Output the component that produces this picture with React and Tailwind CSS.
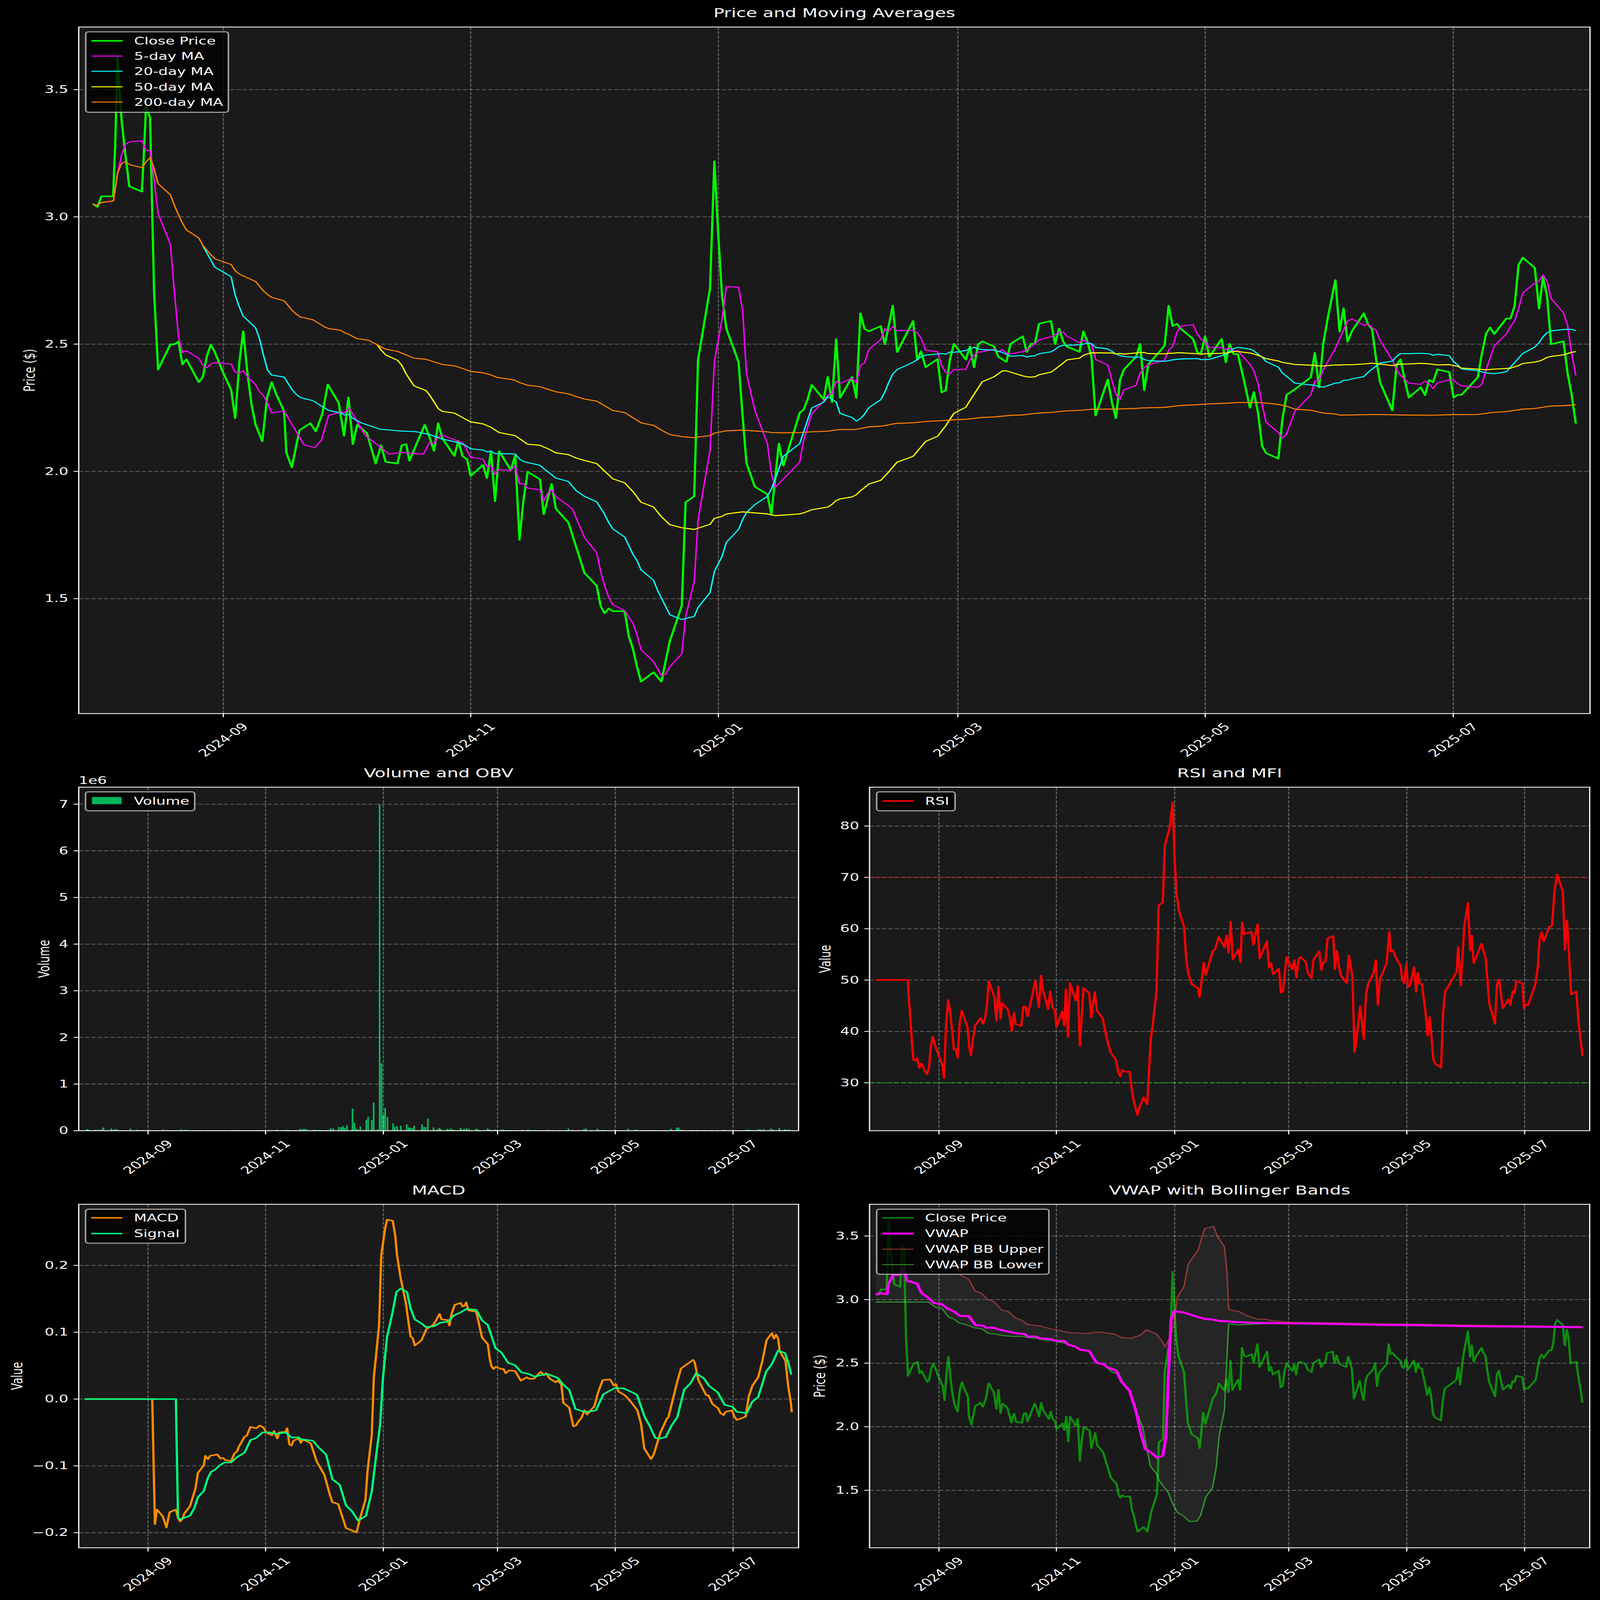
// Series were read off the chart, so they are kept in page pixels and each panel
// uses a viewBox in the same coordinates.
const seg = (ox, oy, sx, sy, flat) => {
  const out = [];
  for (let i = 0; i < flat.length; i += 2) out.push([ox + flat[i] / sx, oy + flat[i + 1] / sy]);
  return out;
};
const z1 = (f) => seg(0, 0, 1.3067, 1.568, f);
const z2 = (f) => seg(1200, 1400, 1.12, 0.98, f);
const z8 = (f) => seg(220, 400, 1.4255, 1.206, f);
const z9 = (f) => seg(1300, 600, 1.4933, 0.7127, f);
const z10 = (f) => seg(2300, 1100, 1.4933, 1.568, f);
const z11 = (f) => seg(3350, 1000, 1.432, 1.568, f);
const zV = (f) => seg(2200, 4750, 0.6907, 0.8924, f);
const zR = (f) => seg(2200, 3050, 0.6907, 0.98, f);
const zM = (f) => seg(0, 4750, 0.6817, 0.8924, f);

// VWAP panel pixels <-> price panel pixels
const vwapToPrice = ([x, y]) => [624 + (x - 2623) / 0.4757, 882 + (y - 5285.6) * 2.002];
const priceToVwap = ([x, y]) => [2623 + (x - 624) * 0.4757, 5285.6 + (y - 882) / 2.002];

const closePrice = [
  ...z1([338,1300,356,1320,370,1252,413,1252,421,900,429,368,443,750,458,990,472,1188,518,1222,526,960,533,683,548,750,551,1000]),
  ...z8([300,950,316,1330,365,1206,381,1206,397,1192,413,1305,429,1280,478,1392,494,1368,510,1265,526,1208,542,1245,575,1345,607,1430,623,1569,640,1290,655,1142,672,1350,688,1500,704,1600,731,1682,750,1470,768,1392,786,1450,818,1535]),
  ...zV([350,905,355,932,362,865,372,852,377,867,383,835,388,782,398,815,403,875,407,805,411,890,415,855,424,870,432,925,437,892,441,922,452,925,456,892,460,890,463,920,477,855]).map(vwapToPrice),
  ...z2([0,370,14,425,27,315,40,375,78,445,90,385,103,445]),
  ...z9([8,905,22,952,74,920,90,958,107,880,124,1025,141,880,190,935,208,893,226,1137,243,1020,260,940,312,962,327,1063,360,975,378,1047,430,1087,497,1233,548,1270,565,1330,581,1350,598,1336,615,1344,665,1344,682,1417,700,1455,716,1505,733,1548,785,1521,818,1548,853,1431,903,1328,919,1028,955,1011,971,615,1021,408,1039,40,1055,250,1071,430,1089,525,1140,622,1157,780,1173,915,1208,983,1260,1005,1277,1063,1308,858,1327,922,1395,769,1411,760,1428,730,1445,688,1495,730,1512,665,1530,738,1547,555]),
  ...z10([70,812,120,680,138,812,155,273,172,372,190,388,240,355,257,470,290,225,308,520,375,322,392,570,408,516,427,617,477,565,494,778,511,765,528,570,545,468,595,568,612,485,629,617,646,470,663,452,713,485,730,550,764,583,781,468,832,420,849,520,866,468,883,468,900,340,950,322,967,470,984,370,1001,453,1017,486,1069,519,1085,388,1102,453,1119,550,1136,925,1187,695,1204,840,1221,942,1238,698,1254,632,1305,550,1322,468,1339,763,1356,600,1424,480,1441,225,1458,355,1475,340,1492,372,1543,437,1560,520]),
  ...z11([7,690,24,577,41,708,66,650,90,593,107,742,122,625,138,690,155,690,180,860,203,1032,219,932,236,1065,252,1275,268,1322,317,1357,333,1110,350,950,383,915,447,838,463,682,480,902,497,620,513,475,545,218,562,547,578,398,594,611,611,545,659,430,676,500,692,530,708,720,724,870,773,1050,790,760,806,723,822,850,839,967,887,902,904,952,920,855,936,870,953,788,1001,805,1018,968,1034,950,1050,950,1115,838,1131,690,1148,560,1164,520,1181,562,1229,463,1246,463,1262,385,1278,122,1295,75,1343,140,1360,400,1376,200,1392,320,1408,627,1458,608,1474,810,1490,945,1507,1133]),
];

const ma5 = [
  ...z8([55,518,73,525,90,511,138,503,155,365,170,280,186,225,203,213,252,208,268,256,285,256,300,400,316,565,365,716,381,950,397,1165,413,1247,429,1238,478,1275,494,1308,510,1322,526,1303,542,1296,607,1303,623,1343,640,1348,655,1335,672,1365,704,1405,720,1438,736,1460,752,1495,768,1543,818,1533,835,1570]),
  [850,1810],[880,1820],[898,1790],
  ...z8([995,1555,1044,1538,1060,1542,1075,1517,1090,1545]),
  [1020,1770],[1058,1813],[1087,1847],[1120,1840],[1183,1847],
  ...z2([0,392,15,395,25,372,40,362,103,393]),
  ...z9([0,868,22,898,74,903,90,925,107,922,124,947,141,933,190,936,208,922,226,975,243,975,260,987,312,992,327,1025,345,1002,360,992,378,1012,430,1038,447,1048,497,1130,548,1175,565,1230,581,1270,598,1303,615,1325,665,1342,700,1380,716,1412,733,1455,785,1490,818,1530,835,1528,853,1505,903,1468,919,1360,955,1258,971,1080,1021,878,1039,620,1071,498,1089,403,1140,405,1157,472,1173,655,1208,762,1260,858,1277,945,1293,985,1395,912,1411,850,1445,772,1495,735,1512,718,1530,713,1547,677]),
  ...z10([70,720,120,688,138,715,155,605,172,590,190,505,240,440,257,372,273,388,290,358,308,385,375,380,392,398,408,430,427,508,477,518,494,607,511,650,528,660,545,632,595,632,612,570,629,540,646,522,663,518,713,503,730,518,747,505,764,527,781,532,832,517,849,505,866,488,900,443,950,422,967,410,984,393,1001,392,1017,420,1069,460,1085,443,1119,470,1136,567,1187,602,1204,700,1221,790,1238,820,1254,762,1305,732,1322,655,1339,620,1356,603,1424,572,1441,507,1458,485,1475,398,1492,355,1543,345,1560,405]),
  ...z11([8,595,24,612,41,648,90,648,107,662,122,648,138,670,155,668,203,755,219,795,236,880,252,1010,268,1125,317,1190,333,1226,350,1200,383,1055,447,950,463,863,480,855,497,790,545,653,594,480,611,465,659,507,676,497,692,522,708,537,724,603,773,728,790,790,806,825,839,875,887,883,904,862,920,880,936,910,953,873,1001,855,1018,858,1034,878,1050,892,1115,902,1131,882,1148,790,1181,637,1229,563,1246,515,1262,480,1278,400,1295,300,1343,237,1360,225,1376,185,1392,225,1408,335,1458,428,1474,505,1490,680,1507,827]),
];

const ma20 = [
  ...z8([494,722,542,828,607,875,623,965,640,1025,655,1068,704,1125,720,1180,736,1260,752,1333,768,1357,818,1367,850,1430,865,1450,882,1467,933,1483,978,1518,995,1530,1044,1543,1060,1553,1075,1550,1090,1568]),
  [1010,1720],[1060,1745],[1120,1753],[1160,1755],
  ...z2([0,360,15,367,40,378,90,392]),
  ...z9([0,863,22,873,74,877,90,882,107,880,124,887,208,888,226,903,243,910,312,921,327,931,345,940,378,958,430,968,463,995,497,1011,548,1027,581,1063,598,1087,615,1105,665,1129,700,1180,716,1197,733,1224,785,1254,803,1285,853,1354,903,1368,955,1359,971,1333,1021,1290,1039,1229,1071,1185,1089,1144,1140,1107,1157,1078,1173,1058,1208,1035,1260,1011,1277,990,1327,895,1395,858,1411,825,1445,755,1495,738,1512,722,1547,737]),
  ...z10([70,912,120,937,138,960,155,945,172,917,190,875,240,824,257,775,273,715,290,660,308,632,375,585,392,568,408,550,427,540,494,530,511,534,528,520,545,522,595,510,612,500,629,490,646,500,663,504,713,508,747,522,781,547,832,542,849,552,866,546,883,544,900,531,950,519,967,503,984,484,1001,478,1069,474,1085,470,1102,463,1119,467,1136,490,1187,500,1204,515,1221,533,1254,549,1305,554,1322,552,1339,568,1356,574,1424,580,1458,570,1492,564,1560,562]),
  ...z11([8,725,41,724,90,700,107,693,138,655,155,647,203,658,219,670,252,710,268,738,317,773,333,810,383,875,447,887,463,888,480,897,497,901,545,875,562,873,578,857,594,856,611,848,659,834,676,806,692,786,724,747,773,735,790,705,806,687,839,687,887,685,920,688,936,698,953,691,1001,700,1018,737,1034,758,1050,785,1115,796,1148,810,1181,815,1229,803,1295,686,1343,645,1360,618,1376,580,1392,553,1408,542,1458,533,1490,532,1507,541]),
];

const ma50 = [
  ...z8([1188,1208,1205,1235,1222,1258,1270,1285,1287,1310,1303,1350,1335,1410,1383,1433,1400,1460,1432,1522,1448,1535,1497,1544]),
  ...z9([0,787,22,795,74,801,107,811,141,826,208,835,260,860,312,863,327,868,345,873,378,885,430,890,463,900,497,907,548,916,615,960,665,972,700,998,733,1028,785,1042,818,1070,853,1093,903,1102,955,1107,1021,1092,1039,1075,1071,1069,1089,1062,1157,1056,1260,1062,1293,1067,1395,1062,1411,1059,1445,1050,1512,1042,1530,1034,1547,1023]),
  ...z10([70,1457,120,1444,138,1430,155,1405,172,1385,190,1362,240,1338,273,1285,308,1222,375,1185,427,1090,477,1057,511,990,545,911,595,872,612,830,663,710,713,677,747,640,764,640,832,672,849,678,866,680,883,678,900,665,950,648,967,630,1001,590,1017,570,1069,559,1085,541,1102,532,1119,525,1204,526,1221,532,1238,529,1254,533,1322,524,1339,523,1356,530,1424,532,1441,528,1458,528,1475,525,1492,525,1560,531]),
  ...z11([8,691,24,688,107,684,138,674,155,674,203,683,219,689,252,708,268,719,317,734,333,743,383,756,463,762,480,766,497,766,545,759,562,760,578,758,611,758,659,753,692,748,773,763,790,757,806,754,839,753,887,749,920,752,953,759,1001,757,1034,768,1050,779,1115,786,1148,790,1181,786,1246,780,1278,763,1295,750,1343,741,1360,735,1376,725,1392,711,1408,705,1458,695,1490,679,1507,674]),
];

const ma200 = [
  ...z8([55,518,73,525,90,511,138,503,155,365,170,320,186,310,203,325,252,340,268,312,285,290,300,345,316,418,365,473,381,525,397,570,413,612,429,645,478,685,494,720,510,745,542,787,607,815,623,845,640,862,655,871,704,898,736,945,752,962,768,976,818,993,850,1040,865,1057,882,1072,933,1086,978,1120,995,1129,1044,1138,1060,1150,1075,1157,1107,1178,1155,1187,1188,1208,1222,1230,1270,1241,1335,1274,1383,1280,1416,1293,1448,1305,1497,1312]),
  ...z9([0,643,22,649,74,653,107,659,131,666,190,672,208,675,226,681,260,689,312,693,327,697,378,708,430,714,463,722,497,729,548,735,615,762,665,768,733,798,785,805,818,819,853,832,903,838,955,841,971,839,1021,835,1039,828,1089,821,1157,819,1260,824,1277,826,1327,827,1395,826,1445,824,1512,822,1563,817]),
  ...z10([120,1014,138,1013,190,997,240,993,257,989,290,979,308,975,375,971,427,963,511,956,545,952,595,949,612,946,663,937,713,934,781,924,832,921,900,909,950,905,1017,895,1069,892,1119,885,1238,883,1305,880,1322,877,1424,873,1492,861,1560,856]),
  ...z11([8,1011,41,1007,90,1005,155,999,236,999,268,1002,317,1011,350,1022,383,1041,447,1048,497,1066,545,1072,562,1079,611,1078,708,1075,839,1079,936,1080,1018,1076,1115,1075,1181,1061,1229,1057,1295,1041,1343,1037,1408,1021,1458,1019,1507,1013]),
];

const rsi = zR([171,917,232,917,234,990,238,1100,240,1170,243,1237,247,1238,250,1228,254,1268,258,1250,265,1280,269,1293,273,1265,276,1190,280,1143,285,1180,295,1235,299,1260,302,1308,306,1090,310,997,314,1050,318,1130,321,1195,325,1193,328,1228,332,1090,336,1040,347,1105,351,1190,354,1217,358,1150,362,1098,373,1069,377,1092,381,1070,385,1015,388,921,399,985,403,1080,407,944,411,1072,414,1010,425,1035,429,1070,433,1120,437,1048,440,1093,451,1101,455,1023,459,1023,463,1062,470,1000,478,920,485,1027,489,900,492,950,503,1035,507,962,511,1027,516,1037,519,1105,530,1043,534,1100,537,955,541,1145,545,930,556,1000,560,940,564,1180,571,950,582,970,586,1067,593,965,597,1040,608,1070,616,1150,623,1205,634,1238,638,1285,642,1302,646,1275,650,1283,660,1283,664,1350,668,1400,675,1455,680,1420,687,1385,694,1413,698,1260,701,1150,705,1090,712,960,716,620,724,608,728,380,737,315,743,210,747,440,751,580,755,640,765,705,769,830,773,890,780,935,792,950,795,985,799,920,803,848,807,897,821,800,825,795,832,745,843,788,847,740,851,810,855,685,859,835,870,795,874,847,877,688,881,735,895,725,899,777,907,695,911,832,925,762,929,868,933,850,937,895,948,872,952,968,956,962,963,825,966,840,974,875,978,838,982,908,986,835,990,826,1000,845,1004,890,1011,910,1015,835,1026,803,1030,878,1034,845,1038,845,1042,752,1053,742,1056,875,1060,800,1064,865,1068,900,1079,930,1083,820,1090,900,1094,1205,1097,1170,1105,1022,1112,1153,1116,980,1120,935,1131,888,1135,838,1139,1017,1143,915,1156,850,1161,725,1164,805,1168,798,1172,820,1183,862,1186,915,1190,930,1194,852,1197,945,1201,940,1209,866,1213,965,1216,888,1220,933,1224,933,1231,1045,1235,1140,1239,1065,1242,1130,1246,1230,1250,1252,1261,1267,1265,1045,1269,960,1273,950,1291,885,1294,786,1299,940,1306,700,1313,610,1317,800,1320,740,1324,850,1339,773,1347,830,1354,1010,1365,1092,1369,935,1373,915,1380,1030,1391,995,1395,1017,1399,962,1403,970,1406,922,1418,930,1421,1030,1425,1015,1429,1017,1443,935,1448,860,1451,755,1455,728,1459,763,1470,705,1475,702,1480,560,1485,497,1496,565,1500,798,1504,680,1508,820,1512,975,1522,963,1526,1080,1530,1150,1534,1220]);

const macd = zM([161,839,290,839,295,1293,299,1240,310,1265,317,1305,323,1250,335,1240,339,1270,343,1283,347,1275,351,1255,362,1227,372,1165,377,1107,388,1080,391,1045,396,1057,400,1045,414,1040,420,1055,425,1053,429,1060,440,1064,447,1035,451,1030,455,1012,466,975,470,972,477,940,488,945,495,935,502,943,507,960,518,970,522,955,528,982,532,960,544,958,547,945,551,1003,555,1008,559,990,569,982,573,998,577,985,592,1000,603,1065,618,1115,628,1185,633,1213,644,1220,659,1307,679,1323,686,1270,696,1205,700,1100,708,970,712,760,716,685,722,570,726,320,733,225,737,188,748,192,753,250,756,315,763,400,773,490,778,560,782,612,786,618,790,645,803,625,812,585,825,570,830,555,837,530,841,550,852,552,856,572,860,530,866,497,877,490,881,503,885,500,888,488,892,517,907,522,918,615,929,640,933,695,936,720,940,730,944,722,955,730,959,730,963,745,970,735,981,737,985,750,992,772,1003,760,1007,765,1017,765,1030,740,1036,752,1040,745,1047,765,1058,778,1062,772,1069,785,1073,853,1084,870,1092,938,1097,935,1100,925,1108,905,1113,880,1118,895,1132,865,1139,815,1148,770,1162,768,1169,790,1173,785,1178,812,1190,825,1202,850,1214,880,1221,930,1227,1018,1240,1057,1245,1040,1258,960,1270,910,1273,905,1290,775,1297,728,1320,697,1323,705,1330,770,1345,825,1349,825,1357,857,1368,873,1372,890,1378,897,1382,885,1394,880,1398,900,1403,915,1420,903,1426,830,1433,790,1444,760,1452,700,1460,625,1470,600,1474,620,1478,605,1482,620,1485,665,1496,700,1501,790,1506,850,1508,887]);

const signal = zM([161,839,335,839,339,1270,344,1275,362,1262,370,1235,377,1195,388,1173,396,1125,402,1103,410,1095,418,1080,428,1069,440,1069,451,1050,466,1033,477,988,488,980,500,960,514,960,526,965,544,960,555,978,569,978,573,985,596,990,607,1015,621,1040,633,1130,647,1150,659,1225,670,1245,682,1280,697,1263,708,1175,716,1050,724,930,729,770,737,615,747,530,755,450,763,438,775,450,782,510,790,550,803,565,811,578,826,575,838,562,853,558,865,535,877,525,888,512,907,515,918,553,929,570,944,655,955,670,968,708,980,715,993,742,1007,748,1018,757,1036,750,1043,748,1062,762,1073,787,1084,805,1096,875,1111,884,1119,885,1135,880,1149,822,1160,810,1170,800,1187,800,1197,808,1213,823,1228,905,1237,935,1248,980,1257,982,1268,977,1279,935,1290,905,1303,805,1315,782,1326,745,1341,765,1350,790,1367,815,1380,860,1395,867,1403,885,1422,890,1433,848,1444,832,1459,740,1470,712,1482,663,1495,672,1501,705,1507,750]);

const vwap = zV([170,460,178,455,192,458,195,420,204,388,214,388,224,368,231,410,250,420,258,453,272,472,282,490,298,495,310,512,320,520,332,537,350,538,362,570,378,573,383,580,398,580,410,588,424,593,440,600,458,603,463,612,480,612,485,618,510,622,517,628,534,628,542,642,555,648,565,660,582,664,596,707,610,713,618,725,634,735,644,775,660,810,672,880,682,965,690,1020,703,1035,713,1052,724,1045,730,980,735,750,740,550,746,520,765,525,790,540,805,548,820,550,834,556,850,557,870,560,910,563,960,564,1050,566,1150,570,1220,571,1300,574,1430,576,1534,578]);

const vwapUpper = zV([170,352,325,352,335,390,350,405,362,447,374,455,387,478,398,485,414,517,425,520,440,545,452,553,463,568,490,575,510,585,525,590,540,597,580,601,595,596,610,597,632,604,645,616,663,618,680,608,693,587,712,603,723,630,728,650,738,615,745,570,752,470,765,430,773,350,782,325,792,298,805,220,822,212,830,250,843,287,848,380,851,514,872,522,885,535,905,548,925,550,935,555,970,560,1100,564,1300,570,1534,576]);

const vwapLower = zV([170,487,272,487,285,505,298,510,310,540,322,550,330,562,346,570,360,580,375,584,387,600,400,603,410,607,435,612,450,611,465,616,480,618,490,623,510,627,520,632,534,635,545,645,555,650,570,660,582,666,600,710,610,712,625,740,640,750,650,790,660,810,670,870,685,940,700,1082,712,1110,717,1135,735,1180,742,1215,752,1250,765,1265,775,1283,790,1282,797,1262,807,1195,820,1160,827,1090,833,970,843,880,851,566,870,570,900,567,930,565,1100,568,1300,573,1534,578]);

const volumeBars = [17,1182,20,1180,25,1191,37,1185,41,1185,46,1190,50,1176,54,1158,67,1191,71,1170,75,1185,80,1176,84,1182,113,1173,126,1185,130,1190,135,1189,139,1190,142,1191,163,1191,167,1191,184,1182,192,1188,218,1191,223,1182,231,1186,251,1191,281,1191,302,1191,318,1191,343,1188,368,1191,390,1191,398,1191,403,1191,432,1185,440,1191,452,1185,457,1188,478,1191,482,1176,487,1176,491,1176,495,1179,508,1191,512,1185,517,1188,524,1188,537,1191,541,1190,545,1186,549,1167,554,1170,566,1152,571,1155,575,1140,579,1161,584,1131,596,927,600,1098,604,1173,608,1182,613,1146,626,1065,630,1026,638,1068,642,855,650,1185,655,-2787,659,375,663,1002,667,921,672,1030,684,1107,688,1150,693,1140,701,1137,714,1119,718,1158,722,1161,726,1167,730,1137,747,1119,751,1152,755,1152,760,1050,772,1158,776,1188,781,1179,785,1164,788,1176,802,1173,806,1182,810,1170,814,1185,818,1185,831,1164,835,1185,839,1176,844,1170,849,1173,865,1173,869,1179,873,1191,877,1191,890,1170,894,1182,898,1188,902,1190,907,1182,920,1185,924,1182,932,1188,953,1191,966,1185,978,1182,982,1190,987,1188,994,1191,1011,1191,1016,1191,1024,1185,1045,1191,1053,1191,1066,1170,1071,1190,1076,1188,1080,1191,1096,1191,1100,1176,1104,1170,1129,1173,1134,1190,1138,1190,1142,1188,1167,1185,1196,1173,1213,1182,1217,1190,1226,1191,1230,1191,1243,1191,1247,1191,1251,1191,1255,1191,1259,1191,1276,1188,1289,1173,1302,1158,1306,1161,1310,1185,1315,1188,1331,1191,1335,1191,1339,1191,1343,1191,1347,1188,1360,1191,1364,1191,1377,1191,1390,1188,1398,1191,1406,1185,1424,1191,1449,1191,1453,1182,1458,1185,1462,1190,1466,1188,1479,1182,1483,1179,1487,1190,1491,1176,1507,1170,1512,1182,1520,1191,1525,1164,1537,1179,1541,1188,1546,1182,1550,1191];

const DATE_LABELS = ['2024-09', '2024-11', '2025-01', '2025-03', '2025-05', '2025-07'];
const WIDE_X = [624, 1315, 2007, 2676, 3367, 4060];
const LEFT_X = [413.7, 742, 1071, 1390, 1719, 2048];
const RIGHT_X = [2623, 2951, 3281.5, 3600, 3930, 4259];

const toPoints = (pts) => pts.map(([x, y]) => `${x.toFixed(1)},${y.toFixed(1)}`).join(' ');

function Line({ pts, color, width = 4.17, opacity = 1 }) {
  return (
    <polyline
      points={toPoints(pts)}
      fill="none"
      stroke={color}
      strokeWidth={width}
      strokeOpacity={opacity}
      strokeLinejoin="round"
    />
  );
}

function Legend({ x, y, w, h, rows }) {
  return (
    <g>
      <rect x={x} y={y} width={w} height={h} rx={8} fill="#000" fillOpacity={0.8} stroke="#ccc" strokeOpacity={0.8} strokeWidth={4.17} />
      {rows.map((r) => (
        <g key={r.label}>
          {r.patch ? (
            <rect x={x + 18} y={r.y - 16} width={83} height={29} fill={r.color} fillOpacity={r.opacity ?? 1} />
          ) : (
            <line x1={x + 16} x2={x + 103} y1={r.y} y2={r.y} stroke={r.color} strokeOpacity={r.opacity ?? 1} strokeWidth={r.width ?? 4.17} />
          )}
          <text x={x + 135} y={r.y + 1} dominantBaseline="central" className="fill-white text-[41.67px]">
            {r.label}
          </text>
        </g>
      ))}
    </g>
  );
}

// Axes frame with grid, ticks and labels. `under` is drawn below the grid, children above it.
function Axes({ title, ylabel, ylabelX, left, right, top, bottom, xs, yTicks, under, children, legend }) {
  const mid = (left + right) / 2;
  const midY = (top + bottom) / 2;
  return (
    <g>
      <rect x={left} y={top} width={right - left} height={bottom - top} fill="#1a1a1a" />
      {under}
      <g stroke="#fff" strokeOpacity={0.3} strokeWidth={3.33} strokeDasharray="12.3 5.3">
        {xs.map((x) => (
          <line key={x} x1={x} x2={x} y1={top} y2={bottom} />
        ))}
        {yTicks.map(([, y]) => (
          <line key={y} x1={left} x2={right} y1={y} y2={y} />
        ))}
      </g>
      {children}
      {legend}
      <rect x={left} y={top} width={right - left} height={bottom - top} fill="none" stroke="#fff" strokeWidth={3.33} />
      <g stroke="#fff" strokeWidth={3.33}>
        {xs.map((x) => (
          <line key={x} x1={x} x2={x} y1={bottom} y2={bottom + 14.6} />
        ))}
        {yTicks.map(([, y]) => (
          <line key={y} x1={left - 14.6} x2={left} y1={y} y2={y} />
        ))}
      </g>
      {yTicks.map(([label, y]) => (
        <text key={label} x={left - 29} y={y} textAnchor="end" dominantBaseline="central" className="fill-white text-[41.67px]">
          {label}
        </text>
      ))}
      {xs.map((x, i) => (
        <text
          key={x}
          transform={`translate(${x} ${bottom + 107}) rotate(-45)`}
          textAnchor="middle"
          dominantBaseline="central"
          className="fill-white text-[41.67px]"
        >
          {DATE_LABELS[i]}
        </text>
      ))}
      <text x={mid} y={top - 40} textAnchor="middle" className="fill-white text-[50px]">
        {title}
      </text>
      <text
        transform={`translate(${ylabelX} ${midY}) rotate(-90)`}
        textAnchor="middle"
        dominantBaseline="central"
        className="fill-white text-[41.67px]"
      >
        {ylabel}
      </text>
    </g>
  );
}

function Panel({ box, className = '', children }) {
  return (
    <svg viewBox={box.join(' ')} preserveAspectRatio="none" className={`block h-full min-h-0 w-full min-w-0 ${className}`}>
      {children}
    </svg>
  );
}

function PricePanel() {
  const y = (v) => 882 + (3 - v) * 1035;
  return (
    <Panel box={[0, 0, 4470, 3100]} className="col-span-2">
      <Axes
        title="Price and Moving Averages"
        ylabel="Price ($)"
        ylabelX={83}
        left={220}
        right={4442}
        top={110}
        bottom={2902}
        xs={WIDE_X}
        yTicks={[['3.5', y(3.5)], ['3.0', y(3)], ['2.5', y(2.5)], ['2.0', y(2)], ['1.5', y(1.5)]]}
        legend={
          <Legend
            x={239.5}
            y={129.5}
            w={398.5}
            h={327}
            rows={[
              { label: 'Close Price', color: '#00ff00', width: 6.25, y: 166 },
              { label: '5-day MA', color: '#ff00ff', y: 228 },
              { label: '20-day MA', color: '#00ffff', y: 290 },
              { label: '50-day MA', color: '#ffff00', y: 353 },
              { label: '200-day MA', color: '#ff8000', y: 415 },
            ]}
          />
        }
      >
        <Line pts={closePrice} color="#00ff00" width={6.25} />
        <Line pts={ma5} color="#ff00ff" />
        <Line pts={ma20} color="#00ffff" />
        <Line pts={ma50} color="#ffff00" />
        <Line pts={ma200} color="#ff8000" />
      </Axes>
    </Panel>
  );
}

function VolumePanel() {
  const bars = [];
  for (let i = 0; i < volumeBars.length; i += 2) {
    const top = 4200 + volumeBars[i + 1] / 3;
    bars.push(
      <rect key={i} x={220 + volumeBars[i] / 0.7792 - 2.2} y={top} width={4.4} height={4599 - top} fill="#00ff7f" fillOpacity={0.7} />
    );
  }
  const y = (m) => 4599 - m * 189.7;
  return (
    <Panel box={[0, 3100, 2250, 1690]}>
      <Axes
        title="Volume and OBV"
        ylabel="Volume"
        ylabelX={123}
        left={220}
        right={2231}
        top={3202}
        bottom={4599}
        xs={LEFT_X}
        yTicks={[0, 1, 2, 3, 4, 5, 6, 7].map((m) => [String(m), y(m)])}
        under={bars}
        legend={
          <Legend
            x={239}
            y={3221}
            w={305}
            h={77}
            rows={[{ label: 'Volume', color: '#00ff7f', opacity: 0.7, patch: true, y: 3258 }]}
          />
        }
      />
      <text x={220} y={3175} dominantBaseline="central" className="fill-white text-[41.67px]">
        1e6
      </text>
    </Panel>
  );
}

function RsiPanel() {
  const y = (v) => 3360 + (80 - v) * 20.88;
  return (
    <Panel box={[2250, 3100, 2220, 1690]}>
      <Axes
        title="RSI and MFI"
        ylabel="Value"
        ylabelX={2306}
        left={2429}
        right={4441}
        top={3202}
        bottom={4599}
        xs={RIGHT_X}
        yTicks={[80, 70, 60, 50, 40, 30].map((v) => [String(v), y(v)])}
        legend={
          <Legend x={2449} y={3221} w={219} h={77} rows={[{ label: 'RSI', color: '#ff0000', width: 6.25, y: 3258 }]} />
        }
      >
        <line x1={2429} x2={4441} y1={y(70)} y2={y(70)} stroke="#ff0000" strokeOpacity={0.5} strokeWidth={4.17} strokeDasharray="15.4 6.7" />
        <line x1={2429} x2={4441} y1={y(30)} y2={y(30)} stroke="#00ff00" strokeOpacity={0.4} strokeWidth={4.17} strokeDasharray="15.4 6.7" />
        <Line pts={rsi} color="#ff0000" width={6.25} />
      </Axes>
    </Panel>
  );
}

function MacdPanel() {
  const y = (v) => 5690 - v * 2717;
  return (
    <Panel box={[0, 4790, 2250, 1717]}>
      <Axes
        title="MACD"
        ylabel="Value"
        ylabelX={48}
        left={220}
        right={2231}
        top={4898}
        bottom={6295}
        xs={LEFT_X}
        yTicks={[['0.2', y(0.2)], ['0.1', y(0.1)], ['0.0', y(0)], ['\u22120.1', y(-0.1)], ['\u22120.2', y(-0.2)]]}
        legend={
          <Legend
            x={239}
            y={4918}
            w={279}
            h={138}
            rows={[
              { label: 'MACD', color: '#ff8c00', width: 6.25, y: 4953 },
              { label: 'Signal', color: '#00ff7f', width: 6.25, y: 5017 },
            ]}
          />
        }
      >
        <Line pts={macd} color="#ff8c00" width={6.25} />
        <Line pts={signal} color="#00ff7f" width={6.25} />
      </Axes>
    </Panel>
  );
}

function VwapPanel() {
  const y = (v) => 5285.6 + (3 - v) * 517;
  const band = [...vwapUpper, ...[...vwapLower].reverse()];
  return (
    <Panel box={[2250, 4790, 2220, 1717]}>
      <Axes
        title="VWAP with Bollinger Bands"
        ylabel="Price ($)"
        ylabelX={2291}
        left={2429}
        right={4441}
        top={4898}
        bottom={6295}
        xs={RIGHT_X}
        yTicks={[['3.5', y(3.5)], ['3.0', y(3)], ['2.5', y(2.5)], ['2.0', y(2)], ['1.5', y(1.5)]]}
        under={<polygon points={toPoints(band)} fill="#fff" fillOpacity={0.05} />}
        legend={
          <Legend
            x={2449}
            y={4918}
            w={481}
            h={264.5}
            rows={[
              { label: 'Close Price', color: '#00ff00', width: 6.25, opacity: 0.5, y: 4953 },
              { label: 'VWAP', color: '#ff00ff', width: 8.33, y: 5017 },
              { label: 'VWAP BB Upper', color: '#ff5050', opacity: 0.5, y: 5080.5 },
              { label: 'VWAP BB Lower', color: '#40ff40', opacity: 0.5, y: 5143 },
            ]}
          />
        }
      >
        <Line pts={closePrice.map(priceToVwap)} color="#00ff00" width={6.25} opacity={0.5} />
        <Line pts={vwapUpper} color="#ff5050" opacity={0.5} />
        <Line pts={vwapLower} color="#40ff40" opacity={0.5} />
        <Line pts={vwap} color="#ff00ff" width={8.33} />
      </Axes>
    </Panel>
  );
}

export default function App() {
  return (
    <div className="grid h-screen w-screen grid-cols-[2250fr_2220fr] grid-rows-[3100fr_1690fr_1717fr] overflow-hidden bg-black font-['DejaVu_Sans',sans-serif]">
      <PricePanel />
      <VolumePanel />
      <RsiPanel />
      <MacdPanel />
      <VwapPanel />
    </div>
  );
}
